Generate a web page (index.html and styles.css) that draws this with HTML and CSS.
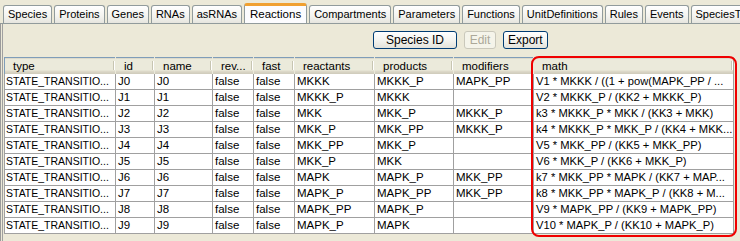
FILE: index.html
```html
<!DOCTYPE html>
<html>
<head>
<meta charset="utf-8">
<link rel="stylesheet" href="styles.css">
</head>
<body>
<div class="window">
  <div class="tabs">
    <div class="tab">Species</div>
    <div class="tab">Proteins</div>
    <div class="tab">Genes</div>
    <div class="tab">RNAs</div>
    <div class="tab">asRNAs</div>
    <div class="tab active">Reactions</div>
    <div class="tab">Compartments</div>
    <div class="tab">Parameters</div>
    <div class="tab">Functions</div>
    <div class="tab">UnitDefinitions</div>
    <div class="tab">Rules</div>
    <div class="tab">Events</div>
    <div class="tab">SpeciesTypes</div>
  </div>
  <div class="panel">
    <div class="toolbar">
      <button class="btn btn-wide">Species ID</button>
      <button class="btn btn-disabled">Edit</button>
      <button class="btn">Export</button>
    </div>
    <div class="tablewrap">
      <table class="grid">
        <colgroup>
          <col class="c-type"><col class="c-id"><col class="c-name"><col class="c-rev"><col class="c-fast"><col class="c-react"><col class="c-prod"><col class="c-mod"><col class="c-math">
        </colgroup>
        <thead>
          <tr><th>type</th><th>id</th><th>name</th><th>rev...</th><th>fast</th><th>reactants</th><th>products</th><th>modifiers</th><th>math</th></tr>
        </thead>
        <tbody>
          <tr><td>STATE_TRANSITIO...</td><td>J0</td><td>J0</td><td>false</td><td>false</td><td>MKKK</td><td>MKKK_P</td><td>MAPK_PP</td><td>V1 * MKKK / ((1 + pow(MAPK_PP / ...</td></tr>
          <tr><td>STATE_TRANSITIO...</td><td>J1</td><td>J1</td><td>false</td><td>false</td><td>MKKK_P</td><td>MKKK</td><td></td><td>V2 * MKKK_P / (KK2 + MKKK_P)</td></tr>
          <tr><td>STATE_TRANSITIO...</td><td>J2</td><td>J2</td><td>false</td><td>false</td><td>MKK</td><td>MKK_P</td><td>MKKK_P</td><td>k3 * MKKK_P * MKK / (KK3 + MKK)</td></tr>
          <tr><td>STATE_TRANSITIO...</td><td>J3</td><td>J3</td><td>false</td><td>false</td><td>MKK_P</td><td>MKK_PP</td><td>MKKK_P</td><td>k4 * MKKK_P * MKK_P / (KK4 + MKK...</td></tr>
          <tr><td>STATE_TRANSITIO...</td><td>J4</td><td>J4</td><td>false</td><td>false</td><td>MKK_PP</td><td>MKK_P</td><td></td><td>V5 * MKK_PP / (KK5 + MKK_PP)</td></tr>
          <tr><td>STATE_TRANSITIO...</td><td>J5</td><td>J5</td><td>false</td><td>false</td><td>MKK_P</td><td>MKK</td><td></td><td>V6 * MKK_P / (KK6 + MKK_P)</td></tr>
          <tr><td>STATE_TRANSITIO...</td><td>J6</td><td>J6</td><td>false</td><td>false</td><td>MAPK</td><td>MAPK_P</td><td>MKK_PP</td><td>k7 * MKK_PP * MAPK / (KK7 + MAP...</td></tr>
          <tr><td>STATE_TRANSITIO...</td><td>J7</td><td>J7</td><td>false</td><td>false</td><td>MAPK_P</td><td>MAPK_PP</td><td>MKK_PP</td><td>k8 * MKK_PP * MAPK_P / (KK8 + M...</td></tr>
          <tr><td>STATE_TRANSITIO...</td><td>J8</td><td>J8</td><td>false</td><td>false</td><td>MAPK_PP</td><td>MAPK_P</td><td></td><td>V9 * MAPK_PP / (KK9 + MAPK_PP)</td></tr>
          <tr><td>STATE_TRANSITIO...</td><td>J9</td><td>J9</td><td>false</td><td>false</td><td>MAPK_P</td><td>MAPK</td><td></td><td>V10 * MAPK_P / (KK10 + MAPK_P)</td></tr>
        </tbody>
      </table>
      <div class="highlight"></div>
    </div>
  </div>
</div>
</body>
</html>
```
FILE: styles.css
```css
html, body {
  margin: 0;
  padding: 0;
  background: #ECE9D8;
  overflow: hidden;
}
body {
  width: 740px;
  height: 241px;
  font-family: "Liberation Sans", Arial, sans-serif;
  font-size: 11px;
  color: #000;
}
.window {
  width: 740px;
  height: 241px;
  overflow: hidden;
}
.tabs {
  display: flex;
  align-items: flex-end;
  gap: 2px;
  padding: 2px 0 0 3px;
  height: 21px;
  position: relative;
  z-index: 1;
  overflow: hidden;
}
.tab {
  flex: none;
  height: 18px;
  box-sizing: border-box;
  padding: 0 4px;
  border: 1px solid #919B9C;
  border-bottom: none;
  border-radius: 3px 3px 0 0;
  background: linear-gradient(#FFFFFF, #F3F3EF 60%, #E6E5DE);
  line-height: 17px;
  white-space: nowrap;
  font-size: 11px;
}
.tab.active {
  height: 21px;
  margin-bottom: -1px;
  border-top: 3px solid #F0A030;
  background: #FCFCFE;
  line-height: 17px;
  padding: 0 5px;
  font-size: 11.5px;
}
.panel {
  border-top: 1px solid #919B9C;
  border-left: 1px solid #9A9A9A;
  box-shadow: inset 1px 0 0 #ECE9D8, inset 2px 0 0 #A0A0A0;
  padding: 7px 0 0 3px;
  height: 218px;
  box-sizing: border-box;
}
.toolbar {
  display: flex;
  gap: 7px;
  padding-left: 369px;
  height: 18px;
}
.btn {
  height: 18px;
  box-sizing: border-box;
  margin: 0;
  padding: 0 4px;
  border: 1px solid #003C74;
  border-radius: 3px;
  background: linear-gradient(#FFFFFF, #F4F4F0 50%, #E3E2DA);
  font-family: "Liberation Sans", Arial, sans-serif;
  font-size: 12px;
  line-height: 15px;
  color: #000;
}
.btn-wide {
  width: 84px;
}
.btn-disabled {
  border-color: #CAC8BB;
  background: #F5F4EA;
  color: #ACA899;
  width: 32px;
}
.tablewrap {
  position: relative;
  margin-top: 8px;
  width: 730px;
}
.grid {
  border-collapse: collapse;
  table-layout: fixed;
  width: 730px;
  border-top: 1px solid #7F9DB9;
  border-left: 1px solid #7F9DB9;
}
.c-type { width: 111px; }
.c-id { width: 39px; }
.c-name { width: 58px; }
.c-rev { width: 41px; }
.c-fast { width: 41px; }
.c-react { width: 80px; }
.c-prod { width: 79px; }
.c-mod { width: 80px; }
.c-math { width: 200px; }
.grid th {
  height: 16px;
  box-sizing: border-box;
  padding: 0 0 0 8px;
  text-align: left;
  font-weight: normal;
  font-size: 11.5px;
  background: linear-gradient(#EBEADB 0, #EBEADB 12px, #E2DECD 12px, #D6D2C2 14px, #CBC7B8 16px);
  border-right: 1px solid #EBEADB;
  position: relative;
  white-space: nowrap;
  overflow: hidden;
}
.grid th::after {
  content: "";
  position: absolute;
  right: 1px;
  top: 3px;
  bottom: 4px;
  width: 1px;
  background: #C7C5B2;
  box-shadow: 1px 0 0 #FFFFFF;
}
.grid th:last-child {
  border-right: 1px solid #ACA899;
}
.grid td {
  height: 16px;
  box-sizing: border-box;
  padding: 0 0 0 2px;
  border: 1px solid #A0A0A0;
  border-top: none;
  background: #FFFFFF;
  white-space: nowrap;
  overflow: hidden;
  line-height: 15px;
  font-size: 11.5px;
}
.grid td:first-child {
  border-left: 1px solid #A0A0A0;
  font-size: 10.5px;
  padding-left: 1px;
}
.grid td:last-child {
  font-size: 11.2px;
}
.highlight {
  position: absolute;
  left: 527px;
  top: -1px;
  width: 202px;
  height: 177px;
  border: 2px solid #F00000;
  border-radius: 8px;
  pointer-events: none;
}
```
